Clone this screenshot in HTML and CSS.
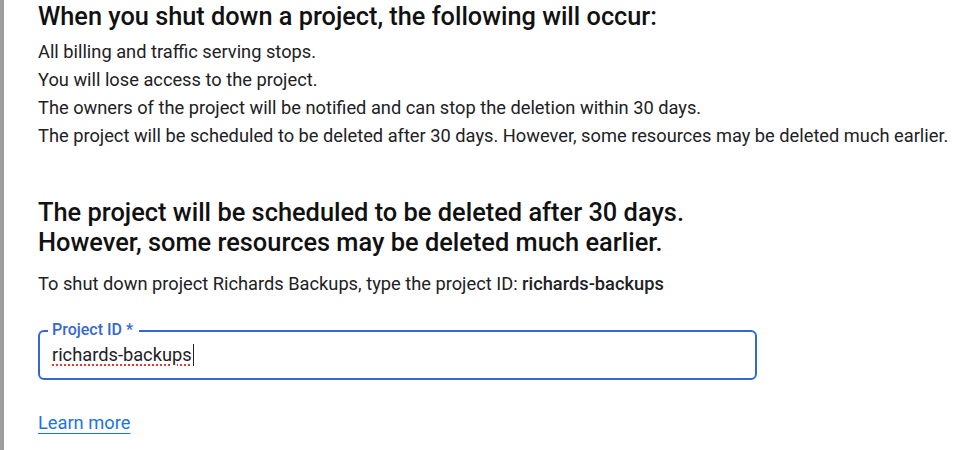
FILE: index.html
```html
<!DOCTYPE html>
<html>
<head>
<meta charset="utf-8">
<link rel="stylesheet" href="styles.css">
</head>
<body>
<div class="page">
  <main class="content">
    <h2 class="title">When you shut down a project, the following will occur:</h2>
    <ul class="effects">
      <li>All billing and traffic serving stops.</li>
      <li>You will lose access to the project.</li>
      <li>The owners of the project will be notified and can stop the deletion within 30 days.</li>
      <li>The project will be scheduled to be deleted after 30 days. However, some resources may be deleted much earlier.</li>
    </ul>
    <h2 class="warning">The project will be scheduled to be deleted after 30 days.<br>However, some resources may be deleted much earlier.</h2>
    <p class="prompt">To shut down project Richards Backups, type the project ID: <b>richards-backups</b></p>
    <div class="field">
      <span class="field-label">Project ID *</span>
      <div class="field-value"><span class="typed">richards-backups</span><span class="caret"></span></div>
    </div>
    <a class="learn" href="#">Learn more</a>
  </main>
</div>
</body>
</html>
```

FILE: styles.css
```css
html, body {
  margin: 0;
  padding: 0;
  background: #ffffff;
}
body {
  font-family: Roboto, "Noto Sans", Arial, sans-serif;
  color: #202124;
}
.page {
  display: flex;
  min-height: 450px;
  border-left: 4px solid #9e9e9e;
  box-sizing: border-box;
}
.content {
  padding-left: 34px;
  flex: 1;
  display: flex;
  flex-direction: column;
  align-items: flex-start;
}
.title {
  margin: 0;
  padding-top: 2px;
  font-size: 25.3px;
  font-weight: 500;
  line-height: 30px;
  color: #111111;
}
.effects {
  list-style: none;
  margin: 0;
  padding: 6px 0 0;
  font-size: 18.25px;
  line-height: 28px;
}
.warning {
  margin: 47px 0 0;
  font-size: 25.4px;
  font-weight: 500;
  line-height: 30px;
  color: #111111;
}
.prompt {
  margin: 14px 0 0;
  font-size: 18.25px;
  line-height: 26px;
}
.prompt b {
  font-weight: 500;
}
.field {
  position: relative;
  margin-top: 33px;
  width: 719px;
  height: 50px;
  box-sizing: border-box;
  border: 2px solid #3367d6;
  border-radius: 6px;
  padding: 0 12px;
  display: flex;
  align-items: center;
}
.field-label {
  position: absolute;
  left: 8px;
  top: -12px;
  padding: 0 6px 0 4px;
  background: #ffffff;
  font-size: 16px;
  font-weight: 500;
  line-height: 20px;
  color: #3367d6;
}
.field-value {
  display: flex;
  align-items: center;
  font-size: 18.25px;
  line-height: 24px;
}
.typed {
  text-decoration: underline dotted #e53935;
  text-decoration-thickness: 2px;
  text-underline-offset: 3px;
}
.caret {
  width: 1px;
  height: 22px;
  background: #202124;
  margin-left: 1px;
}
.learn {
  margin-top: 32px;
  font-size: 18.25px;
  color: #1a73e8;
  text-decoration: underline;
  text-underline-offset: 4px;
  line-height: 22px;
}
```
